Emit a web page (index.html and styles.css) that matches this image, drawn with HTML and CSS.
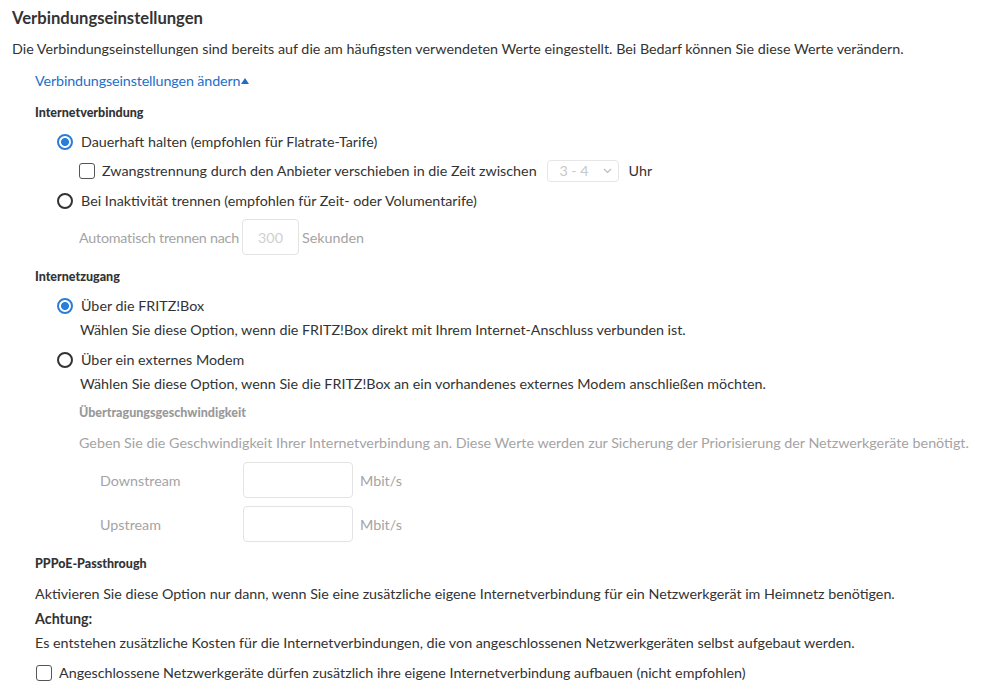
FILE: index.html
```html
<!doctype html>
<html lang="de">
  <head>
    <meta charset="UTF-8" />
    <meta name="viewport" content="width=device-width, initial-scale=1.0" />
    <title>Verbindungseinstellungen</title>
    <link rel="stylesheet" href="styles.css">
  </head>
  <body>
    <h2 class="page-title">Verbindungseinstellungen</h2>
    <p class="intro">Die Verbindungseinstellungen sind bereits auf die am häufigsten verwendeten Werte eingestellt. Bei Bedarf können Sie diese Werte verändern.</p>

    <div class="settings">
      <a class="toggle-link" href="#">Verbindungseinstellungen ändern<span class="caret"></span></a>

      <h4 class="group-title first">Internetverbindung</h4>
      <label class="option radio-row">
        <span class="radio checked"></span>Dauerhaft halten (empfohlen für Flatrate-Tarife)
      </label>
      <label class="option check-row sub">
        <span class="checkbox"></span>Zwangstrennung durch den Anbieter verschieben in die Zeit zwischen
        <span class="select">3 - 4<svg width="9" height="6" viewBox="0 0 9 6"><path d="M1 1l3.5 3.5L8 1" fill="none" stroke="#bbb" stroke-width="1.1"/></svg></span>
        <span class="unit">Uhr</span>
      </label>
      <label class="option radio-row gap6">
        <span class="radio"></span>Bei Inaktivität trennen (empfohlen für Zeit- oder Volumentarife)
      </label>
      <div class="field-row auto-row disabled">
        <span class="tight">Automatisch trennen nach</span>
        <span class="input small">300</span>
        <span>Sekunden</span>
      </div>

      <h4 class="group-title">Internetzugang</h4>
      <label class="option radio-row">
        <span class="radio checked"></span>Über die FRITZ!Box
      </label>
      <p class="hint">Wählen Sie diese Option, wenn die FRITZ!Box direkt mit Ihrem Internet-Anschluss verbunden ist.</p>
      <label class="option radio-row gap6">
        <span class="radio"></span>Über ein externes Modem
      </label>
      <p class="hint">Wählen Sie diese Option, wenn Sie die FRITZ!Box an ein vorhandenes externes Modem anschließen möchten.</p>

      <div class="speed disabled">
        <h4 class="group-title sub-title">Übertragungsgeschwindigkeit</h4>
        <p class="speed-text">Geben Sie die Geschwindigkeit Ihrer Internetverbindung an. Diese Werte werden zur Sicherung der Priorisierung der Netzwerkgeräte benötigt.</p>
        <div class="field-row speed-row down">
          <span class="speed-label">Downstream</span>
          <span class="input wide"></span>
          <span>Mbit/s</span>
        </div>
        <div class="field-row speed-row up">
          <span class="speed-label">Upstream</span>
          <span class="input wide"></span>
          <span>Mbit/s</span>
        </div>
      </div>

      <h4 class="group-title">PPPoE-Passthrough</h4>
      <p class="text pppoe">Aktivieren Sie diese Option nur dann, wenn Sie eine zusätzliche eigene Internetverbindung für ein Netzwerkgerät im Heimnetz benötigen.</p>
      <p class="text strong">Achtung:</p>
      <p class="text">Es entstehen zusätzliche Kosten für die Internetverbindungen, die von angeschlossenen Netzwerkgeräten selbst aufgebaut werden.</p>
      <label class="option last-check">
        <span class="checkbox"></span>Angeschlossene Netzwerkgeräte dürfen zusätzlich ihre eigene Internetverbindung aufbauen (nicht empfohlen)
      </label>
    </div>
  </body>
</html>
```

FILE: styles.css
```css
body {
  margin: 0;
  padding: 6px 12px 0;
  font-family: Lato, "Open Sans", sans-serif;
  font-size: 14.3px;
  color: #333;
  background: #fff;
}

p {
  margin: 0;
}

.page-title {
  margin: 0;
  font-size: 16.6px;
  font-weight: 700;
  line-height: 24px;
  color: #333;
}
.intro {
  margin-top: 7px;
  line-height: 24px;
}

.settings {
  padding-left: 23px;
}

.toggle-link {
  display: inline-flex;
  align-items: center;
  margin-top: 8px;
  line-height: 24px;
  color: #1e6fc6;
  text-decoration: none;
  letter-spacing: -0.12px;
}
.caret {
  width: 0;
  height: 0;
  margin-left: 1px;
  border-left: 4.5px solid transparent;
  border-right: 4.5px solid transparent;
  border-bottom: 6px solid #1e6fc6;
}

.group-title {
  margin: 10px 0 0;
  font-size: 12.5px;
  font-weight: 900;
  line-height: 24px;
  color: #333;
}
.group-title.first {
  margin-top: 8px;
}

.option {
  display: flex;
  align-items: center;
  line-height: 24px;
  margin-top: 5px;
}
.option.gap6 {
  margin-top: 6px;
}
.radio-row {
  padding-left: 22px;
}
.sub {
  padding-left: 44px;
}

.radio {
  box-sizing: border-box;
  width: 16px;
  height: 16px;
  margin-right: 8px;
  border: 2px solid #333;
  border-radius: 50%;
  flex: none;
}
.radio.checked {
  border-color: #2a7ed8;
  background: radial-gradient(circle, #2a7ed8 0 3.6px, #fff 4.4px);
}

.checkbox {
  box-sizing: border-box;
  width: 16px;
  height: 16px;
  margin-right: 7px;
  border: 1.5px solid #555;
  border-radius: 3px;
  flex: none;
}

.select {
  box-sizing: border-box;
  display: inline-flex;
  align-items: center;
  justify-content: flex-end;
  gap: 14px;
  width: 72px;
  height: 22px;
  margin-left: 10px;
  padding-right: 6px;
  border: 1px solid #e6e6e6;
  border-radius: 4px;
  color: #c8c8c8;
}
.unit {
  margin-left: 10px;
}

.field-row {
  display: flex;
  align-items: center;
}
.disabled {
  color: #a4a4a4;
}
.auto-row {
  margin-top: 6px;
  padding-left: 44px;
  gap: 3px;
}
.tight {
  letter-spacing: -0.22px;
}

.input {
  box-sizing: border-box;
  display: flex;
  align-items: center;
  justify-content: center;
  height: 36px;
  border: 1px solid #e3e3e3;
  border-radius: 4px;
  color: #cfcfcf;
}
.input.small {
  width: 57px;
}
.input.wide {
  width: 110px;
  margin-right: 7px;
}

.hint {
  padding-left: 45px;
  line-height: 24px;
}

.speed {
  padding-left: 44px;
}
.sub-title {
  margin-top: 5px;
  color: #999;
}
.speed-text {
  margin-top: 6px;
  line-height: 24px;
  white-space: nowrap;
}
.speed-row {
  padding-left: 21px;
}
.speed-row.down {
  margin-top: 7px;
}
.speed-row.up {
  margin-top: 8px;
}
.speed-label {
  width: 143px;
}

.text {
  line-height: 24px;
}
.text.pppoe {
  margin-top: 6px;
}
.text.strong {
  margin-top: 1px;
  font-weight: 700;
}

.last-check {
  margin-top: 6px;
  padding-left: 1px;
}
```
